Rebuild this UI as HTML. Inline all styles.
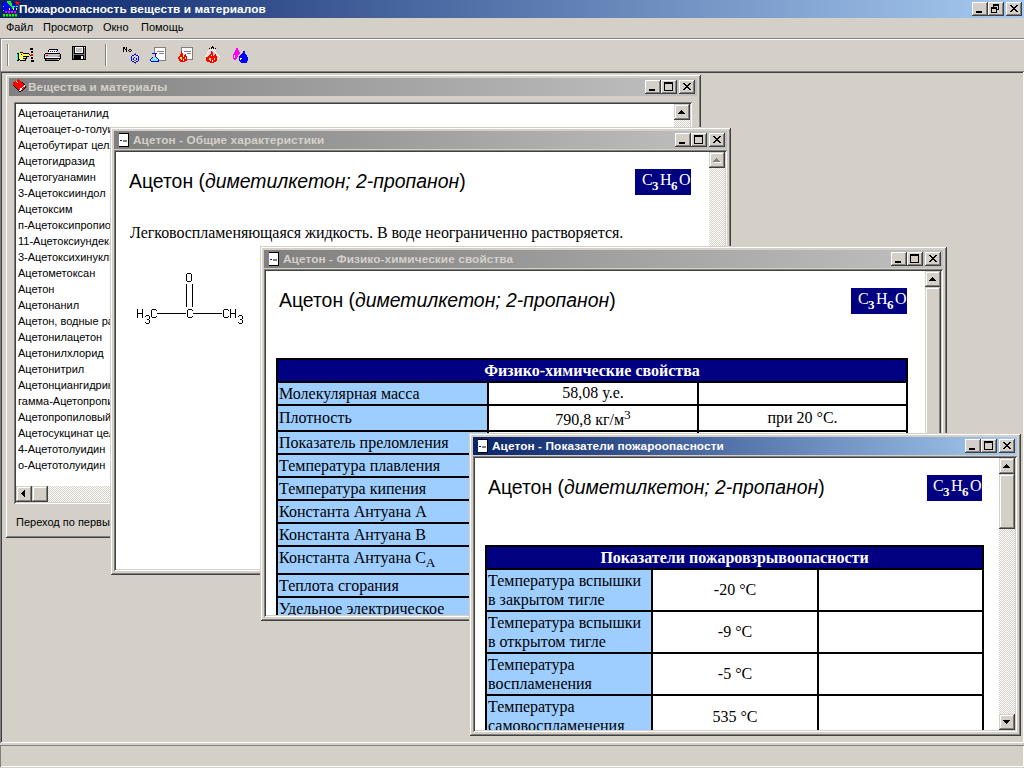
<!DOCTYPE html><html><head><meta charset="utf-8"><style>
html,body{margin:0;padding:0}
body{width:1024px;height:768px;position:relative;overflow:hidden;background:#D4D0C8;font-family:"Liberation Sans",sans-serif}
body div,body svg{position:absolute;box-sizing:border-box}
.t{white-space:nowrap}
.ui{font:11px/16px "Liberation Sans",sans-serif}
.cap{font:bold 11.8px/16px "Liberation Sans",sans-serif;letter-spacing:0.1px}
.hd{font:19.4px/22px "Liberation Sans",sans-serif}
.sr{font:16px/19px "Liberation Serif",serif}
sub,sup{line-height:0}
.fsub{font:bold 13px/19px "Liberation Serif",serif}
.srb{font:bold 16px/19px "Liberation Serif",serif}
</style></head><body>
<div style="left:0px;top:0px;width:1024px;height:18px;background:linear-gradient(to right,#0A246A,#A6CAF0);"></div>
<svg style="left:0px;top:0px" width="20" height="17" shape-rendering="crispEdges"><rect x="4" y="1" width="1" height="1" fill="#000000"/><rect x="5" y="1" width="2" height="1" fill="#0000FF"/><rect x="7" y="1" width="4" height="1" fill="#00FF00"/><rect x="11" y="1" width="1" height="1" fill="#0000FF"/><rect x="12" y="1" width="1" height="1" fill="#000000"/><rect x="16" y="1" width="1" height="1" fill="#FF0000"/><rect x="3" y="2" width="1" height="1" fill="#000000"/><rect x="4" y="2" width="3" height="1" fill="#0000FF"/><rect x="7" y="2" width="4" height="1" fill="#00FF00"/><rect x="11" y="2" width="2" height="1" fill="#0000FF"/><rect x="13" y="2" width="1" height="1" fill="#000000"/><rect x="15" y="2" width="5" height="1" fill="#FF0000"/><rect x="2" y="3" width="1" height="1" fill="#000000"/><rect x="3" y="3" width="5" height="1" fill="#0000FF"/><rect x="8" y="3" width="4" height="1" fill="#00FF00"/><rect x="12" y="3" width="2" height="1" fill="#0000FF"/><rect x="14" y="3" width="1" height="1" fill="#000000"/><rect x="16" y="3" width="3" height="1" fill="#FF0000"/><rect x="2" y="4" width="7" height="1" fill="#0000FF"/><rect x="9" y="4" width="3" height="1" fill="#00FF00"/><rect x="12" y="4" width="3" height="1" fill="#0000FF"/><rect x="16" y="4" width="1" height="1" fill="#FF0000"/><rect x="18" y="4" width="1" height="1" fill="#FF0000"/><rect x="2" y="5" width="8" height="1" fill="#0000FF"/><rect x="10" y="5" width="2" height="1" fill="#00FF00"/><rect x="12" y="5" width="3" height="1" fill="#0000FF"/><rect x="2" y="6" width="1" height="1" fill="#0000FF"/><rect x="3" y="6" width="1" height="1" fill="#00FFFF"/><rect x="4" y="6" width="7" height="1" fill="#0000FF"/><rect x="11" y="6" width="2" height="1" fill="#00FF00"/><rect x="13" y="6" width="2" height="1" fill="#00FFFF"/><rect x="16" y="6" width="2" height="1" fill="#00FFFF"/><rect x="2" y="7" width="10" height="1" fill="#0000FF"/><rect x="12" y="7" width="2" height="1" fill="#00FF00"/><rect x="14" y="7" width="1" height="1" fill="#0000FF"/><rect x="2" y="8" width="7" height="1" fill="#0000FF"/><rect x="9" y="8" width="1" height="1" fill="#FFFF00"/><rect x="10" y="8" width="2" height="1" fill="#0000FF"/><rect x="12" y="8" width="1" height="1" fill="#00FF00"/><rect x="13" y="8" width="1" height="1" fill="#FFFF00"/><rect x="14" y="8" width="2" height="1" fill="#0000FF"/><rect x="16" y="8" width="1" height="1" fill="#FFFF00"/><rect x="2" y="9" width="1" height="1" fill="#000000"/><rect x="3" y="9" width="6" height="1" fill="#0000FF"/><rect x="9" y="9" width="1" height="1" fill="#FFFF00"/><rect x="10" y="9" width="3" height="1" fill="#0000FF"/><rect x="13" y="9" width="1" height="1" fill="#FFFF00"/><rect x="14" y="9" width="2" height="1" fill="#0000FF"/><rect x="16" y="9" width="1" height="1" fill="#FFFF00"/><rect x="2" y="10" width="1" height="1" fill="#000000"/><rect x="3" y="10" width="1" height="1" fill="#00FFFF"/><rect x="4" y="10" width="11" height="1" fill="#0000FF"/><rect x="3" y="11" width="2" height="1" fill="#0000FF"/><rect x="5" y="11" width="2" height="1" fill="#FF00FF"/><rect x="7" y="11" width="1" height="1" fill="#0000FF"/><rect x="8" y="11" width="2" height="1" fill="#FF00FF"/><rect x="10" y="11" width="1" height="1" fill="#0000FF"/><rect x="11" y="11" width="2" height="1" fill="#FF00FF"/><rect x="13" y="11" width="1" height="1" fill="#0000FF"/><rect x="14" y="11" width="2" height="1" fill="#FF00FF"/><rect x="4" y="12" width="1" height="1" fill="#000000"/><rect x="5" y="12" width="2" height="1" fill="#FF00FF"/><rect x="7" y="12" width="1" height="1" fill="#000000"/><rect x="8" y="12" width="2" height="1" fill="#FF00FF"/><rect x="10" y="12" width="1" height="1" fill="#000000"/><rect x="11" y="12" width="2" height="1" fill="#FF00FF"/><rect x="13" y="12" width="1" height="1" fill="#000000"/><rect x="14" y="12" width="2" height="1" fill="#FF00FF"/><rect x="3" y="14" width="2" height="1" fill="#00FF00"/><rect x="6" y="14" width="2" height="1" fill="#00FF00"/><rect x="9" y="14" width="2" height="1" fill="#00FF00"/><rect x="12" y="14" width="2" height="1" fill="#00FF00"/><rect x="15" y="14" width="2" height="1" fill="#00FF00"/><rect x="3" y="15" width="2" height="1" fill="#00FF00"/><rect x="6" y="15" width="2" height="1" fill="#00FF00"/><rect x="9" y="15" width="2" height="1" fill="#00FF00"/><rect x="12" y="15" width="2" height="1" fill="#00FF00"/><rect x="15" y="15" width="2" height="1" fill="#00FF00"/><rect x="3" y="16" width="2" height="1" fill="#00A000"/><rect x="6" y="16" width="2" height="1" fill="#00A000"/><rect x="9" y="16" width="2" height="1" fill="#00A000"/><rect x="12" y="16" width="2" height="1" fill="#00A000"/><rect x="15" y="16" width="2" height="1" fill="#00A000"/></svg>
<div class="t cap" style="left:19px;top:1px;color:#fff">Пожароопасность веществ и материалов</div>
<div style="left:972px;top:2px;width:16px;height:14px;background:#D4D0C8;box-shadow:inset -1px -1px #404040,inset 1px 1px #FFFFFF,inset -2px -2px #808080,inset 2px 2px #D4D0C8"></div>
<svg style="left:976px;top:11px" width="6" height="2" fill="#000"><rect x="0" y="0" width="6" height="1"/><rect x="0" y="1" width="6" height="1"/></svg>
<div style="left:988px;top:2px;width:16px;height:14px;background:#D4D0C8;box-shadow:inset -1px -1px #404040,inset 1px 1px #FFFFFF,inset -2px -2px #808080,inset 2px 2px #D4D0C8"></div>
<svg style="left:991px;top:4px" width="8" height="9" fill="#000"><rect x="2" y="0" width="6" height="1"/><rect x="2" y="1" width="6" height="1"/><rect x="2" y="2" width="1" height="1"/><rect x="7" y="2" width="1" height="1"/><rect x="0" y="3" width="6" height="1"/><rect x="7" y="3" width="1" height="1"/><rect x="0" y="4" width="6" height="1"/><rect x="7" y="4" width="1" height="1"/><rect x="0" y="5" width="1" height="1"/><rect x="5" y="5" width="3" height="1"/><rect x="0" y="6" width="1" height="1"/><rect x="5" y="6" width="1" height="1"/><rect x="0" y="7" width="1" height="1"/><rect x="5" y="7" width="1" height="1"/><rect x="0" y="8" width="6" height="1"/></svg>
<div style="left:1006px;top:2px;width:16px;height:14px;background:#D4D0C8;box-shadow:inset -1px -1px #404040,inset 1px 1px #FFFFFF,inset -2px -2px #808080,inset 2px 2px #D4D0C8"></div>
<svg style="left:1010px;top:5px" width="8" height="7" fill="#000"><rect x="0" y="0" width="2" height="1"/><rect x="6" y="0" width="2" height="1"/><rect x="1" y="1" width="2" height="1"/><rect x="5" y="1" width="2" height="1"/><rect x="2" y="2" width="4" height="1"/><rect x="3" y="3" width="2" height="1"/><rect x="2" y="4" width="4" height="1"/><rect x="1" y="5" width="2" height="1"/><rect x="5" y="5" width="2" height="1"/><rect x="0" y="6" width="2" height="1"/><rect x="6" y="6" width="2" height="1"/></svg>
<div class="t ui" style="left:6px;top:19px;color:#000">Файл</div>
<div class="t ui" style="left:43px;top:19px;color:#000">Просмотр</div>
<div class="t ui" style="left:103px;top:19px;color:#000">Окно</div>
<div class="t ui" style="left:141px;top:19px;color:#000">Помощь</div>
<div style="left:0px;top:38px;width:1024px;height:1px;background:#808080;"></div>
<div style="left:0px;top:39px;width:1024px;height:1px;background:#FFFFFF;"></div>
<div style="left:0px;top:38px;width:1px;height:33px;background:#808080;"></div>
<div style="left:1px;top:39px;width:1px;height:32px;background:#FFFFFF;"></div>
<div style="left:7px;top:44px;width:1px;height:22px;background:#808080;"></div>
<div style="left:8px;top:44px;width:1px;height:22px;background:#FFFFFF;"></div>
<div style="left:105px;top:44px;width:1px;height:22px;background:#808080;"></div>
<div style="left:106px;top:44px;width:1px;height:22px;background:#FFFFFF;"></div>
<svg style="left:14px;top:44px" width="22" height="18" shape-rendering="crispEdges"><rect x="16" y="4" width="3" height="1" fill="#000000"/><rect x="16" y="5" width="3" height="1" fill="#000000"/><rect x="17" y="7" width="2" height="1" fill="#000000"/><rect x="6" y="8" width="3" height="1" fill="#000000"/><rect x="17" y="8" width="2" height="1" fill="#000000"/><rect x="3" y="9" width="2" height="1" fill="#000000"/><rect x="5" y="9" width="4" height="1" fill="#FFFF00"/><rect x="9" y="9" width="6" height="1" fill="#000000"/><rect x="3" y="10" width="1" height="1" fill="#00FFFF"/><rect x="4" y="10" width="1" height="1" fill="#000000"/><rect x="5" y="10" width="2" height="1" fill="#FFFF00"/><rect x="7" y="10" width="1" height="1" fill="#000000"/><rect x="8" y="10" width="1" height="1" fill="#FFFF00"/><rect x="9" y="10" width="1" height="1" fill="#FFFFFF"/><rect x="10" y="10" width="1" height="1" fill="#FFFF00"/><rect x="11" y="10" width="1" height="1" fill="#FFFFFF"/><rect x="12" y="10" width="1" height="1" fill="#FFFF00"/><rect x="13" y="10" width="1" height="1" fill="#FFFFFF"/><rect x="14" y="10" width="1" height="1" fill="#FFFF00"/><rect x="15" y="10" width="1" height="1" fill="#000000"/><rect x="17" y="10" width="2" height="1" fill="#FF0000"/><rect x="3" y="11" width="1" height="1" fill="#00FFFF"/><rect x="4" y="11" width="1" height="1" fill="#000000"/><rect x="5" y="11" width="1" height="1" fill="#FFFF00"/><rect x="6" y="11" width="1" height="1" fill="#FFFFFF"/><rect x="7" y="11" width="3" height="1" fill="#FFFF00"/><rect x="10" y="11" width="1" height="1" fill="#FFFFFF"/><rect x="11" y="11" width="1" height="1" fill="#FFFF00"/><rect x="12" y="11" width="1" height="1" fill="#FFFFFF"/><rect x="13" y="11" width="3" height="1" fill="#FFFF00"/><rect x="16" y="11" width="1" height="1" fill="#000000"/><rect x="17" y="11" width="2" height="1" fill="#FF0000"/><rect x="3" y="12" width="1" height="1" fill="#00FFFF"/><rect x="4" y="12" width="1" height="1" fill="#000000"/><rect x="5" y="12" width="2" height="1" fill="#FFFF00"/><rect x="7" y="12" width="1" height="1" fill="#FFFFFF"/><rect x="8" y="12" width="1" height="1" fill="#FFFF00"/><rect x="9" y="12" width="6" height="1" fill="#000000"/><rect x="3" y="13" width="1" height="1" fill="#00FFFF"/><rect x="4" y="13" width="1" height="1" fill="#000000"/><rect x="5" y="13" width="1" height="1" fill="#FFFF00"/><rect x="6" y="13" width="1" height="1" fill="#FFFFFF"/><rect x="7" y="13" width="1" height="1" fill="#FFFF00"/><rect x="8" y="13" width="1" height="1" fill="#FFFFFF"/><rect x="9" y="13" width="1" height="1" fill="#FFFF00"/><rect x="10" y="13" width="1" height="1" fill="#FFFFFF"/><rect x="11" y="13" width="1" height="1" fill="#FFFF00"/><rect x="12" y="13" width="1" height="1" fill="#000000"/><rect x="17" y="13" width="2" height="1" fill="#000000"/><rect x="3" y="14" width="1" height="1" fill="#00FFFF"/><rect x="4" y="14" width="1" height="1" fill="#000000"/><rect x="5" y="14" width="2" height="1" fill="#FFFF00"/><rect x="7" y="14" width="1" height="1" fill="#FFFFFF"/><rect x="8" y="14" width="1" height="1" fill="#FFFF00"/><rect x="9" y="14" width="4" height="1" fill="#000000"/><rect x="17" y="14" width="2" height="1" fill="#000000"/><rect x="3" y="15" width="1" height="1" fill="#00FFFF"/><rect x="4" y="15" width="2" height="1" fill="#000000"/><rect x="6" y="15" width="1" height="1" fill="#FFFF00"/><rect x="7" y="15" width="1" height="1" fill="#FFFFFF"/><rect x="8" y="15" width="1" height="1" fill="#FFFF00"/><rect x="9" y="15" width="1" height="1" fill="#FFFFFF"/><rect x="10" y="15" width="1" height="1" fill="#FFFF00"/><rect x="11" y="15" width="1" height="1" fill="#000000"/><rect x="3" y="16" width="2" height="1" fill="#000000"/><rect x="6" y="16" width="6" height="1" fill="#000000"/><rect x="17" y="16" width="3" height="1" fill="#000000"/><rect x="17" y="17" width="3" height="1" fill="#000000"/></svg>
<svg style="left:40px;top:44px" width="22" height="17" shape-rendering="crispEdges"><rect x="9" y="5" width="9" height="1" fill="#000000"/><rect x="8" y="6" width="1" height="1" fill="#000000"/><rect x="9" y="6" width="8" height="1" fill="#FFFFFF"/><rect x="17" y="6" width="1" height="1" fill="#000000"/><rect x="8" y="7" width="1" height="1" fill="#000000"/><rect x="9" y="7" width="1" height="1" fill="#FFFFFF"/><rect x="10" y="7" width="1" height="1" fill="#0000FF"/><rect x="11" y="7" width="1" height="1" fill="#FFFFFF"/><rect x="12" y="7" width="1" height="1" fill="#0000FF"/><rect x="13" y="7" width="1" height="1" fill="#FFFFFF"/><rect x="14" y="7" width="1" height="1" fill="#0000FF"/><rect x="15" y="7" width="1" height="1" fill="#FFFFFF"/><rect x="16" y="7" width="1" height="1" fill="#0000FF"/><rect x="8" y="8" width="9" height="1" fill="#FFFFFF"/><rect x="5" y="9" width="15" height="1" fill="#000000"/><rect x="4" y="10" width="1" height="1" fill="#000000"/><rect x="5" y="10" width="15" height="1" fill="#C0C0C0"/><rect x="20" y="10" width="1" height="1" fill="#000000"/><rect x="4" y="11" width="1" height="1" fill="#000000"/><rect x="5" y="11" width="1" height="1" fill="#C0C0C0"/><rect x="6" y="11" width="2" height="1" fill="#FF0000"/><rect x="8" y="11" width="11" height="1" fill="#C0C0C0"/><rect x="19" y="11" width="1" height="1" fill="#808080"/><rect x="20" y="11" width="1" height="1" fill="#000000"/><rect x="4" y="12" width="1" height="1" fill="#000000"/><rect x="5" y="12" width="13" height="1" fill="#C0C0C0"/><rect x="18" y="12" width="2" height="1" fill="#808080"/><rect x="20" y="12" width="1" height="1" fill="#000000"/><rect x="4" y="13" width="1" height="1" fill="#000000"/><rect x="5" y="13" width="15" height="1" fill="#FFFFFF"/><rect x="20" y="13" width="1" height="1" fill="#000000"/><rect x="4" y="14" width="17" height="1" fill="#000000"/><rect x="5" y="15" width="1" height="1" fill="#000000"/><rect x="6" y="15" width="12" height="1" fill="#808080"/><rect x="18" y="15" width="1" height="1" fill="#FFFFFF"/><rect x="19" y="15" width="1" height="1" fill="#000000"/><rect x="5" y="16" width="14" height="1" fill="#000000"/></svg>
<svg style="left:68px;top:42px" width="22" height="18" shape-rendering="crispEdges"><rect x="4" y="4" width="14" height="1" fill="#000000"/><rect x="4" y="5" width="1" height="1" fill="#000000"/><rect x="5" y="5" width="1" height="1" fill="#808080"/><rect x="6" y="5" width="1" height="1" fill="#000000"/><rect x="7" y="5" width="8" height="1" fill="#FFFFFF"/><rect x="15" y="5" width="1" height="1" fill="#000000"/><rect x="16" y="5" width="1" height="1" fill="#FFFFFF"/><rect x="17" y="5" width="1" height="1" fill="#000000"/><rect x="4" y="6" width="1" height="1" fill="#000000"/><rect x="5" y="6" width="1" height="1" fill="#808080"/><rect x="6" y="6" width="1" height="1" fill="#000000"/><rect x="7" y="6" width="1" height="1" fill="#FFFFFF"/><rect x="8" y="6" width="6" height="1" fill="#C0C0C0"/><rect x="14" y="6" width="1" height="1" fill="#FFFFFF"/><rect x="15" y="6" width="1" height="1" fill="#000000"/><rect x="16" y="6" width="1" height="1" fill="#808080"/><rect x="17" y="6" width="1" height="1" fill="#000000"/><rect x="4" y="7" width="1" height="1" fill="#000000"/><rect x="5" y="7" width="1" height="1" fill="#808080"/><rect x="6" y="7" width="1" height="1" fill="#000000"/><rect x="7" y="7" width="1" height="1" fill="#FFFFFF"/><rect x="8" y="7" width="6" height="1" fill="#C0C0C0"/><rect x="14" y="7" width="1" height="1" fill="#FFFFFF"/><rect x="15" y="7" width="1" height="1" fill="#000000"/><rect x="16" y="7" width="1" height="1" fill="#808080"/><rect x="17" y="7" width="1" height="1" fill="#000000"/><rect x="4" y="8" width="1" height="1" fill="#000000"/><rect x="5" y="8" width="1" height="1" fill="#808080"/><rect x="6" y="8" width="1" height="1" fill="#000000"/><rect x="7" y="8" width="1" height="1" fill="#FFFFFF"/><rect x="8" y="8" width="6" height="1" fill="#C0C0C0"/><rect x="14" y="8" width="1" height="1" fill="#FFFFFF"/><rect x="15" y="8" width="1" height="1" fill="#000000"/><rect x="16" y="8" width="1" height="1" fill="#808080"/><rect x="17" y="8" width="1" height="1" fill="#000000"/><rect x="4" y="9" width="1" height="1" fill="#000000"/><rect x="5" y="9" width="1" height="1" fill="#808080"/><rect x="6" y="9" width="1" height="1" fill="#000000"/><rect x="7" y="9" width="1" height="1" fill="#FFFFFF"/><rect x="8" y="9" width="6" height="1" fill="#C0C0C0"/><rect x="14" y="9" width="1" height="1" fill="#FFFFFF"/><rect x="15" y="9" width="1" height="1" fill="#000000"/><rect x="16" y="9" width="1" height="1" fill="#808080"/><rect x="17" y="9" width="1" height="1" fill="#000000"/><rect x="4" y="10" width="1" height="1" fill="#000000"/><rect x="5" y="10" width="1" height="1" fill="#808080"/><rect x="6" y="10" width="1" height="1" fill="#000000"/><rect x="7" y="10" width="8" height="1" fill="#FFFFFF"/><rect x="15" y="10" width="1" height="1" fill="#000000"/><rect x="16" y="10" width="1" height="1" fill="#808080"/><rect x="17" y="10" width="1" height="1" fill="#000000"/><rect x="4" y="11" width="1" height="1" fill="#000000"/><rect x="5" y="11" width="1" height="1" fill="#808080"/><rect x="6" y="11" width="10" height="1" fill="#000000"/><rect x="16" y="11" width="1" height="1" fill="#808080"/><rect x="17" y="11" width="1" height="1" fill="#000000"/><rect x="4" y="12" width="1" height="1" fill="#000000"/><rect x="5" y="12" width="12" height="1" fill="#808080"/><rect x="17" y="12" width="1" height="1" fill="#000000"/><rect x="4" y="13" width="1" height="1" fill="#000000"/><rect x="5" y="13" width="1" height="1" fill="#808080"/><rect x="6" y="13" width="10" height="1" fill="#000000"/><rect x="16" y="13" width="1" height="1" fill="#808080"/><rect x="17" y="13" width="1" height="1" fill="#000000"/><rect x="4" y="14" width="1" height="1" fill="#000000"/><rect x="5" y="14" width="1" height="1" fill="#808080"/><rect x="6" y="14" width="7" height="1" fill="#000000"/><rect x="13" y="14" width="2" height="1" fill="#FFFFFF"/><rect x="15" y="14" width="1" height="1" fill="#000000"/><rect x="16" y="14" width="1" height="1" fill="#808080"/><rect x="17" y="14" width="1" height="1" fill="#000000"/><rect x="4" y="15" width="1" height="1" fill="#000000"/><rect x="5" y="15" width="1" height="1" fill="#808080"/><rect x="6" y="15" width="7" height="1" fill="#000000"/><rect x="13" y="15" width="2" height="1" fill="#FFFFFF"/><rect x="15" y="15" width="1" height="1" fill="#000000"/><rect x="16" y="15" width="1" height="1" fill="#808080"/><rect x="17" y="15" width="1" height="1" fill="#000000"/><rect x="4" y="16" width="1" height="1" fill="#000000"/><rect x="5" y="16" width="1" height="1" fill="#808080"/><rect x="6" y="16" width="7" height="1" fill="#000000"/><rect x="13" y="16" width="2" height="1" fill="#FFFFFF"/><rect x="15" y="16" width="1" height="1" fill="#000000"/><rect x="16" y="16" width="1" height="1" fill="#808080"/><rect x="17" y="16" width="1" height="1" fill="#000000"/><rect x="4" y="17" width="14" height="1" fill="#000000"/></svg>
<svg style="left:120px;top:44px" width="22" height="20" shape-rendering="crispEdges"><rect x="3" y="3" width="2" height="1" fill="#000000"/><rect x="6" y="3" width="1" height="1" fill="#000000"/><rect x="3" y="4" width="2" height="1" fill="#000000"/><rect x="6" y="4" width="1" height="1" fill="#000000"/><rect x="3" y="5" width="1" height="1" fill="#000000"/><rect x="5" y="5" width="2" height="1" fill="#000000"/><rect x="9" y="5" width="2" height="1" fill="#000000"/><rect x="3" y="6" width="1" height="1" fill="#000000"/><rect x="6" y="6" width="1" height="1" fill="#000000"/><rect x="8" y="6" width="1" height="1" fill="#000000"/><rect x="11" y="6" width="1" height="1" fill="#000000"/><rect x="3" y="7" width="1" height="1" fill="#000000"/><rect x="6" y="7" width="1" height="1" fill="#000000"/><rect x="9" y="7" width="2" height="1" fill="#000000"/><rect x="15" y="9" width="1" height="1" fill="#808000"/><rect x="14" y="10" width="2" height="1" fill="#0000FF"/><rect x="12" y="11" width="2" height="1" fill="#0000FF"/><rect x="16" y="11" width="2" height="1" fill="#0000FF"/><rect x="11" y="12" width="1" height="1" fill="#0000FF"/><rect x="18" y="12" width="1" height="1" fill="#0000FF"/><rect x="11" y="13" width="1" height="1" fill="#0000FF"/><rect x="14" y="13" width="1" height="1" fill="#0000FF"/><rect x="18" y="13" width="1" height="1" fill="#0000FF"/><rect x="11" y="14" width="1" height="1" fill="#0000FF"/><rect x="13" y="14" width="1" height="1" fill="#0000FF"/><rect x="16" y="14" width="1" height="1" fill="#0000FF"/><rect x="18" y="14" width="1" height="1" fill="#0000FF"/><rect x="11" y="15" width="1" height="1" fill="#0000FF"/><rect x="13" y="15" width="1" height="1" fill="#0000FF"/><rect x="16" y="15" width="1" height="1" fill="#0000FF"/><rect x="18" y="15" width="1" height="1" fill="#0000FF"/><rect x="11" y="16" width="1" height="1" fill="#0000FF"/><rect x="14" y="16" width="2" height="1" fill="#808000"/><rect x="18" y="16" width="1" height="1" fill="#0000FF"/><rect x="12" y="17" width="2" height="1" fill="#0000FF"/><rect x="16" y="17" width="2" height="1" fill="#0000FF"/><rect x="14" y="18" width="2" height="1" fill="#0000FF"/><rect x="15" y="19" width="1" height="1" fill="#808000"/></svg>
<svg style="left:146px;top:44px" width="22" height="18" shape-rendering="crispEdges"><rect x="8" y="3" width="12" height="1" fill="#808080"/><rect x="8" y="4" width="1" height="1" fill="#808080"/><rect x="9" y="4" width="10" height="1" fill="#FFFFFF"/><rect x="19" y="4" width="1" height="1" fill="#808080"/><rect x="8" y="5" width="1" height="1" fill="#808080"/><rect x="9" y="5" width="10" height="1" fill="#FFFFFF"/><rect x="19" y="5" width="1" height="1" fill="#808080"/><rect x="8" y="6" width="1" height="1" fill="#808080"/><rect x="9" y="6" width="10" height="1" fill="#FFFFFF"/><rect x="19" y="6" width="1" height="1" fill="#808080"/><rect x="8" y="7" width="1" height="1" fill="#808080"/><rect x="9" y="7" width="2" height="1" fill="#FFFFFF"/><rect x="11" y="7" width="7" height="1" fill="#808080"/><rect x="18" y="7" width="1" height="1" fill="#FFFFFF"/><rect x="19" y="7" width="1" height="1" fill="#808080"/><rect x="8" y="8" width="1" height="1" fill="#808080"/><rect x="9" y="8" width="10" height="1" fill="#FFFFFF"/><rect x="19" y="8" width="1" height="1" fill="#808080"/><rect x="6" y="9" width="5" height="1" fill="#0000FF"/><rect x="11" y="9" width="2" height="1" fill="#FFFFFF"/><rect x="13" y="9" width="5" height="1" fill="#808080"/><rect x="18" y="9" width="1" height="1" fill="#FFFFFF"/><rect x="19" y="9" width="1" height="1" fill="#808080"/><rect x="9" y="10" width="1" height="1" fill="#0000FF"/><rect x="10" y="10" width="9" height="1" fill="#FFFFFF"/><rect x="19" y="10" width="1" height="1" fill="#808080"/><rect x="9" y="11" width="1" height="1" fill="#0000FF"/><rect x="10" y="11" width="9" height="1" fill="#FFFFFF"/><rect x="19" y="11" width="1" height="1" fill="#808080"/><rect x="9" y="12" width="1" height="1" fill="#0000FF"/><rect x="10" y="12" width="9" height="1" fill="#FFFFFF"/><rect x="19" y="12" width="1" height="1" fill="#808080"/><rect x="6" y="13" width="1" height="1" fill="#0000FF"/><rect x="10" y="13" width="1" height="1" fill="#0000FF"/><rect x="11" y="13" width="8" height="1" fill="#FFFFFF"/><rect x="19" y="13" width="1" height="1" fill="#808080"/><rect x="5" y="14" width="1" height="1" fill="#0000FF"/><rect x="6" y="14" width="1" height="1" fill="#00FFFF"/><rect x="7" y="14" width="1" height="1" fill="#FFFFFF"/><rect x="8" y="14" width="1" height="1" fill="#00FFFF"/><rect x="9" y="14" width="1" height="1" fill="#FFFFFF"/><rect x="10" y="14" width="1" height="1" fill="#00FFFF"/><rect x="11" y="14" width="1" height="1" fill="#0000FF"/><rect x="12" y="14" width="7" height="1" fill="#FFFFFF"/><rect x="19" y="14" width="1" height="1" fill="#808080"/><rect x="4" y="15" width="1" height="1" fill="#0000FF"/><rect x="5" y="15" width="1" height="1" fill="#FFFFFF"/><rect x="6" y="15" width="1" height="1" fill="#00FFFF"/><rect x="7" y="15" width="1" height="1" fill="#FFFFFF"/><rect x="8" y="15" width="1" height="1" fill="#00FFFF"/><rect x="9" y="15" width="1" height="1" fill="#FFFFFF"/><rect x="10" y="15" width="1" height="1" fill="#00FFFF"/><rect x="11" y="15" width="1" height="1" fill="#FFFFFF"/><rect x="12" y="15" width="1" height="1" fill="#0000FF"/><rect x="13" y="15" width="6" height="1" fill="#FFFFFF"/><rect x="19" y="15" width="1" height="1" fill="#808080"/><rect x="4" y="16" width="1" height="1" fill="#0000FF"/><rect x="5" y="16" width="1" height="1" fill="#00FFFF"/><rect x="6" y="16" width="1" height="1" fill="#FFFFFF"/><rect x="7" y="16" width="1" height="1" fill="#00FFFF"/><rect x="8" y="16" width="1" height="1" fill="#FFFFFF"/><rect x="9" y="16" width="1" height="1" fill="#00FFFF"/><rect x="10" y="16" width="1" height="1" fill="#FFFFFF"/><rect x="11" y="16" width="1" height="1" fill="#00FFFF"/><rect x="12" y="16" width="1" height="1" fill="#0000FF"/><rect x="13" y="16" width="7" height="1" fill="#808080"/><rect x="5" y="17" width="8" height="1" fill="#0000FF"/></svg>
<svg style="left:174px;top:44px" width="22" height="18" shape-rendering="crispEdges"><rect x="7" y="3" width="12" height="1" fill="#808080"/><rect x="7" y="4" width="1" height="1" fill="#808080"/><rect x="8" y="4" width="10" height="1" fill="#FFFFFF"/><rect x="18" y="4" width="1" height="1" fill="#808080"/><rect x="7" y="5" width="1" height="1" fill="#808080"/><rect x="8" y="5" width="10" height="1" fill="#FFFFFF"/><rect x="18" y="5" width="1" height="1" fill="#808080"/><rect x="7" y="6" width="1" height="1" fill="#808080"/><rect x="8" y="6" width="10" height="1" fill="#FFFFFF"/><rect x="18" y="6" width="1" height="1" fill="#808080"/><rect x="7" y="7" width="1" height="1" fill="#FF0000"/><rect x="8" y="7" width="2" height="1" fill="#FFFFFF"/><rect x="10" y="7" width="7" height="1" fill="#808080"/><rect x="17" y="7" width="1" height="1" fill="#FFFFFF"/><rect x="18" y="7" width="1" height="1" fill="#808080"/><rect x="7" y="8" width="1" height="1" fill="#FF0000"/><rect x="8" y="8" width="10" height="1" fill="#FFFFFF"/><rect x="18" y="8" width="1" height="1" fill="#808080"/><rect x="7" y="9" width="2" height="1" fill="#FF0000"/><rect x="9" y="9" width="4" height="1" fill="#FFFFFF"/><rect x="13" y="9" width="4" height="1" fill="#808080"/><rect x="17" y="9" width="1" height="1" fill="#FFFFFF"/><rect x="18" y="9" width="1" height="1" fill="#808080"/><rect x="6" y="10" width="3" height="1" fill="#FF0000"/><rect x="9" y="10" width="2" height="1" fill="#FFFFFF"/><rect x="11" y="10" width="1" height="1" fill="#FF0000"/><rect x="12" y="10" width="6" height="1" fill="#FFFFFF"/><rect x="18" y="10" width="1" height="1" fill="#808080"/><rect x="6" y="11" width="3" height="1" fill="#FF0000"/><rect x="9" y="11" width="1" height="1" fill="#FFFFFF"/><rect x="10" y="11" width="2" height="1" fill="#FF0000"/><rect x="12" y="11" width="6" height="1" fill="#FFFFFF"/><rect x="18" y="11" width="1" height="1" fill="#808080"/><rect x="5" y="12" width="4" height="1" fill="#FF0000"/><rect x="9" y="12" width="1" height="1" fill="#FFFFFF"/><rect x="10" y="12" width="3" height="1" fill="#FF0000"/><rect x="13" y="12" width="5" height="1" fill="#FFFFFF"/><rect x="18" y="12" width="1" height="1" fill="#808080"/><rect x="4" y="13" width="2" height="1" fill="#FF0000"/><rect x="6" y="13" width="2" height="1" fill="#FFFF00"/><rect x="8" y="13" width="3" height="1" fill="#FF0000"/><rect x="11" y="13" width="1" height="1" fill="#FFFF00"/><rect x="12" y="13" width="1" height="1" fill="#FF0000"/><rect x="13" y="13" width="5" height="1" fill="#FFFFFF"/><rect x="18" y="13" width="1" height="1" fill="#808080"/><rect x="4" y="14" width="2" height="1" fill="#FF0000"/><rect x="6" y="14" width="2" height="1" fill="#FFFF00"/><rect x="8" y="14" width="3" height="1" fill="#FF0000"/><rect x="11" y="14" width="1" height="1" fill="#FFFF00"/><rect x="12" y="14" width="1" height="1" fill="#FF0000"/><rect x="13" y="14" width="5" height="1" fill="#FFFFFF"/><rect x="18" y="14" width="1" height="1" fill="#808080"/><rect x="5" y="15" width="2" height="1" fill="#FF0000"/><rect x="7" y="15" width="1" height="1" fill="#FFFFFF"/><rect x="8" y="15" width="1" height="1" fill="#FF0000"/><rect x="9" y="15" width="1" height="1" fill="#FFFFFF"/><rect x="10" y="15" width="3" height="1" fill="#FF0000"/><rect x="13" y="15" width="6" height="1" fill="#808080"/><rect x="5" y="16" width="4" height="1" fill="#FF0000"/><rect x="9" y="16" width="1" height="1" fill="#FFFFFF"/><rect x="10" y="16" width="3" height="1" fill="#FF0000"/><rect x="6" y="17" width="5" height="1" fill="#FF0000"/></svg>
<svg style="left:200px;top:42px" width="22" height="21" shape-rendering="crispEdges"><rect x="12" y="4" width="1" height="1" fill="#000000"/><rect x="11" y="5" width="3" height="1" fill="#000000"/><rect x="9" y="6" width="1" height="1" fill="#000000"/><rect x="11" y="6" width="1" height="1" fill="#000000"/><rect x="13" y="6" width="1" height="1" fill="#000000"/><rect x="15" y="6" width="1" height="1" fill="#000000"/><rect x="10" y="7" width="1" height="1" fill="#FFFFFF"/><rect x="12" y="7" width="1" height="1" fill="#FFFFFF"/><rect x="14" y="7" width="1" height="1" fill="#FFFFFF"/><rect x="9" y="8" width="1" height="1" fill="#FFFFFF"/><rect x="11" y="8" width="1" height="1" fill="#FFFFFF"/><rect x="13" y="8" width="1" height="1" fill="#FFFFFF"/><rect x="15" y="8" width="1" height="1" fill="#FFFFFF"/><rect x="8" y="9" width="1" height="1" fill="#FFFFFF"/><rect x="11" y="9" width="1" height="1" fill="#FF0000"/><rect x="14" y="9" width="1" height="1" fill="#FFFFFF"/><rect x="7" y="10" width="1" height="1" fill="#FFFFFF"/><rect x="11" y="10" width="2" height="1" fill="#FF0000"/><rect x="15" y="10" width="1" height="1" fill="#FFFFFF"/><rect x="8" y="11" width="1" height="1" fill="#FFFFFF"/><rect x="11" y="11" width="2" height="1" fill="#FF0000"/><rect x="16" y="11" width="1" height="1" fill="#FFFFFF"/><rect x="7" y="12" width="1" height="1" fill="#FFFFFF"/><rect x="10" y="12" width="3" height="1" fill="#FF0000"/><rect x="15" y="12" width="1" height="1" fill="#FF0000"/><rect x="17" y="12" width="1" height="1" fill="#FFFFFF"/><rect x="6" y="13" width="1" height="1" fill="#FFFFFF"/><rect x="9" y="13" width="2" height="1" fill="#FF0000"/><rect x="11" y="13" width="1" height="1" fill="#FFFFFF"/><rect x="12" y="13" width="1" height="1" fill="#FF0000"/><rect x="14" y="13" width="2" height="1" fill="#FF0000"/><rect x="18" y="13" width="1" height="1" fill="#FFFFFF"/><rect x="5" y="14" width="1" height="1" fill="#FFFFFF"/><rect x="8" y="14" width="9" height="1" fill="#FF0000"/><rect x="19" y="14" width="1" height="1" fill="#FFFFFF"/><rect x="6" y="15" width="11" height="1" fill="#FF0000"/><rect x="5" y="16" width="1" height="1" fill="#FFFFFF"/><rect x="6" y="16" width="3" height="1" fill="#FF0000"/><rect x="9" y="16" width="2" height="1" fill="#FFFF00"/><rect x="11" y="16" width="3" height="1" fill="#FF0000"/><rect x="14" y="16" width="1" height="1" fill="#FFFF00"/><rect x="15" y="16" width="2" height="1" fill="#FF0000"/><rect x="18" y="16" width="1" height="1" fill="#FFFFFF"/><rect x="6" y="17" width="3" height="1" fill="#FF0000"/><rect x="9" y="17" width="2" height="1" fill="#FFFF00"/><rect x="11" y="17" width="3" height="1" fill="#FF0000"/><rect x="14" y="17" width="1" height="1" fill="#FFFF00"/><rect x="15" y="17" width="2" height="1" fill="#FF0000"/><rect x="6" y="18" width="4" height="1" fill="#FF0000"/><rect x="10" y="18" width="1" height="1" fill="#FFFFFF"/><rect x="11" y="18" width="1" height="1" fill="#FF0000"/><rect x="12" y="18" width="1" height="1" fill="#FFFFFF"/><rect x="13" y="18" width="4" height="1" fill="#FF0000"/><rect x="7" y="19" width="5" height="1" fill="#FF0000"/><rect x="12" y="19" width="1" height="1" fill="#FFFFFF"/><rect x="13" y="19" width="3" height="1" fill="#FF0000"/><rect x="10" y="20" width="4" height="1" fill="#FF0000"/></svg>
<svg style="left:228px;top:44px" width="22" height="19" shape-rendering="crispEdges"><rect x="8" y="4" width="2" height="1" fill="#FF00FF"/><rect x="8" y="5" width="2" height="1" fill="#FF00FF"/><rect x="7" y="6" width="4" height="1" fill="#FF00FF"/><rect x="7" y="7" width="4" height="1" fill="#FF00FF"/><rect x="15" y="7" width="2" height="1" fill="#0000FF"/><rect x="6" y="8" width="6" height="1" fill="#FF00FF"/><rect x="15" y="8" width="2" height="1" fill="#0000FF"/><rect x="6" y="9" width="6" height="1" fill="#FF00FF"/><rect x="14" y="9" width="3" height="1" fill="#0000FF"/><rect x="5" y="10" width="6" height="1" fill="#FF00FF"/><rect x="13" y="10" width="5" height="1" fill="#0000FF"/><rect x="5" y="11" width="1" height="1" fill="#FF00FF"/><rect x="6" y="11" width="1" height="1" fill="#FFFFFF"/><rect x="7" y="11" width="3" height="1" fill="#FF00FF"/><rect x="12" y="11" width="7" height="1" fill="#0000FF"/><rect x="5" y="12" width="1" height="1" fill="#FF00FF"/><rect x="6" y="12" width="1" height="1" fill="#FFFFFF"/><rect x="7" y="12" width="3" height="1" fill="#FF00FF"/><rect x="11" y="12" width="8" height="1" fill="#0000FF"/><rect x="5" y="13" width="1" height="1" fill="#FF00FF"/><rect x="6" y="13" width="1" height="1" fill="#FFFFFF"/><rect x="7" y="13" width="2" height="1" fill="#FF00FF"/><rect x="11" y="13" width="9" height="1" fill="#0000FF"/><rect x="5" y="14" width="4" height="1" fill="#FF00FF"/><rect x="11" y="14" width="1" height="1" fill="#0000FF"/><rect x="12" y="14" width="2" height="1" fill="#FFFFFF"/><rect x="14" y="14" width="6" height="1" fill="#0000FF"/><rect x="6" y="15" width="2" height="1" fill="#FF00FF"/><rect x="11" y="15" width="1" height="1" fill="#0000FF"/><rect x="12" y="15" width="1" height="1" fill="#FFFFFF"/><rect x="13" y="15" width="7" height="1" fill="#0000FF"/><rect x="11" y="16" width="9" height="1" fill="#0000FF"/><rect x="12" y="17" width="7" height="1" fill="#0000FF"/><rect x="13" y="18" width="6" height="1" fill="#0000FF"/></svg>
<div style="left:0px;top:71px;width:1024px;height:672px;background:#D4D0C8;box-shadow:inset 1px 1px #808080,inset -1px -1px #FFFFFF,inset 2px 2px #404040,inset -2px -2px #D4D0C8"></div>
<div style="left:0px;top:745px;width:1024px;height:22px;background:#D4D0C8;box-shadow:inset 1px 1px #808080,inset -1px -1px #FFFFFF"></div>
<div style="left:5px;top:74px;width:696px;height:464px;background:#D4D0C8;box-shadow:inset 1px 1px #D4D0C8,inset -1px -1px #404040,inset 2px 2px #FFFFFF,inset -2px -2px #808080"></div>
<div style="left:9px;top:78px;width:688px;height:18px;background:linear-gradient(to right,#808080,#C0C0C0);"></div>

<div class="t cap" style="left:28px;top:79px;color:#D4D0C8">Вещества и материалы</div>
<div style="left:645px;top:80px;width:16px;height:14px;background:#D4D0C8;box-shadow:inset -1px -1px #404040,inset 1px 1px #FFFFFF,inset -2px -2px #808080,inset 2px 2px #D4D0C8"></div>
<svg style="left:649px;top:89px" width="6" height="2" fill="#000"><rect x="0" y="0" width="6" height="1"/><rect x="0" y="1" width="6" height="1"/></svg>
<div style="left:661px;top:80px;width:16px;height:14px;background:#D4D0C8;box-shadow:inset -1px -1px #404040,inset 1px 1px #FFFFFF,inset -2px -2px #808080,inset 2px 2px #D4D0C8"></div>
<svg style="left:664px;top:82px" width="9" height="9" fill="#000"><rect x="0" y="0" width="9" height="1"/><rect x="0" y="1" width="9" height="1"/><rect x="0" y="2" width="1" height="1"/><rect x="8" y="2" width="1" height="1"/><rect x="0" y="3" width="1" height="1"/><rect x="8" y="3" width="1" height="1"/><rect x="0" y="4" width="1" height="1"/><rect x="8" y="4" width="1" height="1"/><rect x="0" y="5" width="1" height="1"/><rect x="8" y="5" width="1" height="1"/><rect x="0" y="6" width="1" height="1"/><rect x="8" y="6" width="1" height="1"/><rect x="0" y="7" width="1" height="1"/><rect x="8" y="7" width="1" height="1"/><rect x="0" y="8" width="9" height="1"/></svg>
<div style="left:679px;top:80px;width:16px;height:14px;background:#D4D0C8;box-shadow:inset -1px -1px #404040,inset 1px 1px #FFFFFF,inset -2px -2px #808080,inset 2px 2px #D4D0C8"></div>
<svg style="left:683px;top:83px" width="8" height="7" fill="#000"><rect x="0" y="0" width="2" height="1"/><rect x="6" y="0" width="2" height="1"/><rect x="1" y="1" width="2" height="1"/><rect x="5" y="1" width="2" height="1"/><rect x="2" y="2" width="4" height="1"/><rect x="3" y="3" width="2" height="1"/><rect x="2" y="4" width="4" height="1"/><rect x="1" y="5" width="2" height="1"/><rect x="5" y="5" width="2" height="1"/><rect x="0" y="6" width="2" height="1"/><rect x="6" y="6" width="2" height="1"/></svg>
<svg style="left:10px;top:77px" width="17" height="15" shape-rendering="crispEdges"><rect x="8" y="2" width="1" height="1" fill="#FF0000"/><rect x="7" y="3" width="3" height="1" fill="#FF0000"/><rect x="5" y="4" width="1" height="1" fill="#FF0000"/><rect x="6" y="4" width="1" height="1" fill="#FFFF00"/><rect x="7" y="4" width="4" height="1" fill="#FF0000"/><rect x="3" y="5" width="4" height="1" fill="#FF0000"/><rect x="7" y="5" width="1" height="1" fill="#FFFF00"/><rect x="8" y="5" width="4" height="1" fill="#FF0000"/><rect x="12" y="5" width="1" height="1" fill="#000000"/><rect x="3" y="6" width="10" height="1" fill="#FF0000"/><rect x="13" y="6" width="1" height="1" fill="#000000"/><rect x="3" y="7" width="11" height="1" fill="#FF0000"/><rect x="14" y="7" width="1" height="1" fill="#000000"/><rect x="3" y="8" width="1" height="1" fill="#000000"/><rect x="4" y="8" width="10" height="1" fill="#FF0000"/><rect x="14" y="8" width="1" height="1" fill="#FFFFFF"/><rect x="4" y="9" width="1" height="1" fill="#000000"/><rect x="5" y="9" width="8" height="1" fill="#FF0000"/><rect x="13" y="9" width="2" height="1" fill="#FFFFFF"/><rect x="15" y="9" width="1" height="1" fill="#000000"/><rect x="5" y="10" width="1" height="1" fill="#000000"/><rect x="6" y="10" width="6" height="1" fill="#FF0000"/><rect x="12" y="10" width="1" height="1" fill="#FFFFFF"/><rect x="13" y="10" width="2" height="1" fill="#FF0000"/><rect x="15" y="10" width="1" height="1" fill="#000000"/><rect x="6" y="11" width="1" height="1" fill="#000000"/><rect x="7" y="11" width="3" height="1" fill="#FF0000"/><rect x="10" y="11" width="2" height="1" fill="#FFFFFF"/><rect x="12" y="11" width="2" height="1" fill="#FF0000"/><rect x="14" y="11" width="1" height="1" fill="#000000"/><rect x="7" y="12" width="1" height="1" fill="#000000"/><rect x="8" y="12" width="2" height="1" fill="#FF0000"/><rect x="10" y="12" width="2" height="1" fill="#FFFFFF"/><rect x="12" y="12" width="1" height="1" fill="#FF0000"/><rect x="13" y="12" width="1" height="1" fill="#000000"/><rect x="8" y="13" width="1" height="1" fill="#000000"/><rect x="9" y="13" width="2" height="1" fill="#FFFFFF"/><rect x="11" y="13" width="2" height="1" fill="#000000"/><rect x="9" y="14" width="2" height="1" fill="#000000"/></svg>
<div style="left:14px;top:102px;width:678px;height:402px;background:#fff;box-shadow:inset 1px 1px #808080,inset -1px -1px #FFFFFF,inset 2px 2px #404040,inset -2px -2px #D4D0C8"></div>
<div class="t ui" style="left:18px;top:105px;color:#000">Ацетоацетанилид</div>
<div class="t ui" style="left:18px;top:121px;color:#000">Ацетоацет-о-толуидид</div>
<div class="t ui" style="left:18px;top:137px;color:#000">Ацетобутират целлюлозы</div>
<div class="t ui" style="left:18px;top:153px;color:#000">Ацетогидразид</div>
<div class="t ui" style="left:18px;top:169px;color:#000">Ацетогуанамин</div>
<div class="t ui" style="left:18px;top:185px;color:#000">3-Ацетоксииндол</div>
<div class="t ui" style="left:18px;top:201px;color:#000">Ацетоксим</div>
<div class="t ui" style="left:18px;top:217px;color:#000">п-Ацетоксипропиофенон</div>
<div class="t ui" style="left:18px;top:233px;color:#000">11-Ацетоксиундекан</div>
<div class="t ui" style="left:18px;top:249px;color:#000">3-Ацетоксихинуклидин</div>
<div class="t ui" style="left:18px;top:265px;color:#000">Ацетометоксан</div>
<div class="t ui" style="left:18px;top:281px;color:#000">Ацетон</div>
<div class="t ui" style="left:18px;top:297px;color:#000">Ацетонанил</div>
<div class="t ui" style="left:18px;top:313px;color:#000">Ацетон, водные растворы</div>
<div class="t ui" style="left:18px;top:329px;color:#000">Ацетонилацетон</div>
<div class="t ui" style="left:18px;top:345px;color:#000">Ацетонилхлорид</div>
<div class="t ui" style="left:18px;top:361px;color:#000">Ацетонитрил</div>
<div class="t ui" style="left:18px;top:377px;color:#000">Ацетонциангидрин</div>
<div class="t ui" style="left:18px;top:393px;color:#000">гамма-Ацетопропиловый</div>
<div class="t ui" style="left:18px;top:409px;color:#000">Ацетопропиловый спирт</div>
<div class="t ui" style="left:18px;top:425px;color:#000">Ацетосукцинат целлюлозы</div>
<div class="t ui" style="left:18px;top:441px;color:#000">4-Ацетотолуидин</div>
<div class="t ui" style="left:18px;top:457px;color:#000">о-Ацетотолуидин</div>
<div class="t ui" style="left:16px;top:514px;color:#000">Переход по первым буквам</div>
<div style="left:674px;top:104px;width:16px;height:382px;background:repeating-conic-gradient(#fff 0 25%,#D4D0C8 0 50%) 0 0/2px 2px;"></div>
<div style="left:674px;top:104px;width:16px;height:16px;background:#D4D0C8;box-shadow:inset -1px -1px #404040,inset 1px 1px #D4D0C8,inset -2px -2px #808080,inset 2px 2px #FFFFFF"></div>
<svg style="left:678px;top:110px" width="7" height="4" fill="#000"><rect x="3" y="0" width="1" height="1"/><rect x="2" y="1" width="3" height="1"/><rect x="1" y="2" width="5" height="1"/><rect x="0" y="3" width="7" height="1"/></svg>
<div style="left:674px;top:470px;width:16px;height:16px;background:#D4D0C8;box-shadow:inset -1px -1px #404040,inset 1px 1px #D4D0C8,inset -2px -2px #808080,inset 2px 2px #FFFFFF"></div>
<svg style="left:678px;top:476px" width="7" height="4" fill="#000"><rect x="0" y="0" width="7" height="1"/><rect x="1" y="1" width="5" height="1"/><rect x="2" y="2" width="3" height="1"/><rect x="3" y="3" width="1" height="1"/></svg>
<div style="left:16px;top:486px;width:658px;height:16px;background:repeating-conic-gradient(#fff 0 25%,#D4D0C8 0 50%) 0 0/2px 2px;"></div>
<div style="left:16px;top:486px;width:16px;height:16px;background:#D4D0C8;box-shadow:inset -1px -1px #404040,inset 1px 1px #D4D0C8,inset -2px -2px #808080,inset 2px 2px #FFFFFF"></div>
<svg style="left:21px;top:490px" width="4" height="7" fill="#000"><rect x="3" y="0" width="1" height="1"/><rect x="2" y="1" width="2" height="1"/><rect x="1" y="2" width="3" height="1"/><rect x="0" y="3" width="4" height="1"/><rect x="1" y="4" width="3" height="1"/><rect x="2" y="5" width="2" height="1"/><rect x="3" y="6" width="1" height="1"/></svg>
<div style="left:32px;top:486px;width:16px;height:16px;background:#D4D0C8;box-shadow:inset -1px -1px #404040,inset 1px 1px #D4D0C8,inset -2px -2px #808080,inset 2px 2px #FFFFFF"></div>
<div style="left:110px;top:127px;width:621px;height:448px;background:#D4D0C8;box-shadow:inset 1px 1px #D4D0C8,inset -1px -1px #404040,inset 2px 2px #FFFFFF,inset -2px -2px #808080"></div>
<div style="left:114px;top:131px;width:613px;height:18px;background:linear-gradient(to right,#808080,#C0C0C0);"></div>
<div style="left:119px;top:133px;width:10px;height:14px;background:#fff;border-top:1px solid #000;border-bottom:1px solid #000;border-right:1px solid #000"></div><div style="left:120px;top:140px;width:2px;height:1px;background:#00f"></div><div style="left:123px;top:140px;width:4px;height:2px;background:#808080"></div>
<div class="t cap" style="left:133px;top:132px;color:#D4D0C8">Ацетон - Общие характеристики</div>
<div style="left:675px;top:133px;width:16px;height:14px;background:#D4D0C8;box-shadow:inset -1px -1px #404040,inset 1px 1px #FFFFFF,inset -2px -2px #808080,inset 2px 2px #D4D0C8"></div>
<svg style="left:679px;top:142px" width="6" height="2" fill="#000"><rect x="0" y="0" width="6" height="1"/><rect x="0" y="1" width="6" height="1"/></svg>
<div style="left:691px;top:133px;width:16px;height:14px;background:#D4D0C8;box-shadow:inset -1px -1px #404040,inset 1px 1px #FFFFFF,inset -2px -2px #808080,inset 2px 2px #D4D0C8"></div>
<svg style="left:694px;top:135px" width="9" height="9" fill="#000"><rect x="0" y="0" width="9" height="1"/><rect x="0" y="1" width="9" height="1"/><rect x="0" y="2" width="1" height="1"/><rect x="8" y="2" width="1" height="1"/><rect x="0" y="3" width="1" height="1"/><rect x="8" y="3" width="1" height="1"/><rect x="0" y="4" width="1" height="1"/><rect x="8" y="4" width="1" height="1"/><rect x="0" y="5" width="1" height="1"/><rect x="8" y="5" width="1" height="1"/><rect x="0" y="6" width="1" height="1"/><rect x="8" y="6" width="1" height="1"/><rect x="0" y="7" width="1" height="1"/><rect x="8" y="7" width="1" height="1"/><rect x="0" y="8" width="9" height="1"/></svg>
<div style="left:709px;top:133px;width:16px;height:14px;background:#D4D0C8;box-shadow:inset -1px -1px #404040,inset 1px 1px #FFFFFF,inset -2px -2px #808080,inset 2px 2px #D4D0C8"></div>
<svg style="left:713px;top:136px" width="8" height="7" fill="#000"><rect x="0" y="0" width="2" height="1"/><rect x="6" y="0" width="2" height="1"/><rect x="1" y="1" width="2" height="1"/><rect x="5" y="1" width="2" height="1"/><rect x="2" y="2" width="4" height="1"/><rect x="3" y="3" width="2" height="1"/><rect x="2" y="4" width="4" height="1"/><rect x="1" y="5" width="2" height="1"/><rect x="5" y="5" width="2" height="1"/><rect x="0" y="6" width="2" height="1"/><rect x="6" y="6" width="2" height="1"/></svg>
<div style="left:114px;top:150px;width:613px;height:421px;background:#fff;box-shadow:inset 1px 1px #808080,inset -1px -1px #FFFFFF,inset 2px 2px #404040,inset -2px -2px #D4D0C8"></div>
<div style="left:709px;top:152px;width:16px;height:417px;background:repeating-conic-gradient(#fff 0 25%,#D4D0C8 0 50%) 0 0/2px 2px;"></div>
<div style="left:709px;top:152px;width:16px;height:16px;background:#D4D0C8;box-shadow:inset -1px -1px #404040,inset 1px 1px #D4D0C8,inset -2px -2px #808080,inset 2px 2px #FFFFFF"></div>
<svg style="left:714px;top:159px" width="7" height="4" fill="#FFFFFF"><rect x="3" y="0" width="1" height="1"/><rect x="2" y="1" width="3" height="1"/><rect x="1" y="2" width="5" height="1"/><rect x="0" y="3" width="7" height="1"/></svg>
<svg style="left:713px;top:158px" width="7" height="4" fill="#808080"><rect x="3" y="0" width="1" height="1"/><rect x="2" y="1" width="3" height="1"/><rect x="1" y="2" width="5" height="1"/><rect x="0" y="3" width="7" height="1"/></svg>
<div style="left:709px;top:553px;width:16px;height:16px;background:#D4D0C8;box-shadow:inset -1px -1px #404040,inset 1px 1px #D4D0C8,inset -2px -2px #808080,inset 2px 2px #FFFFFF"></div>
<svg style="left:713px;top:559px" width="7" height="4" fill="#000"><rect x="0" y="0" width="7" height="1"/><rect x="1" y="1" width="5" height="1"/><rect x="2" y="2" width="3" height="1"/><rect x="3" y="3" width="1" height="1"/></svg>
<div class="t hd" style="left:129px;top:170px;color:#000">Ацетон (<i>диметилкетон; 2-пропанон</i>)</div>
<div class="t sr" style="left:130px;top:223px;color:#000;letter-spacing:-0.06px">Легковоспламеняющаяся жидкость. В воде неограниченно растворяется.</div>
<div style="left:635px;top:169px;width:56px;height:26px;background:#000080;"></div>
<div class="t sr" style="left:642px;top:170px;color:#fff">C</div>
<div class="t fsub" style="left:652px;top:176px;color:#fff">3</div>
<div class="t sr" style="left:660px;top:170px;color:#fff">H</div>
<div class="t fsub" style="left:671px;top:176px;color:#fff">6</div>
<div class="t sr" style="left:679px;top:170px;color:#fff">O</div>
<svg style="left:137px;top:309px" width="6" height="9" fill="#000"><rect x="0" y="0" width="1" height="1"/><rect x="5" y="0" width="1" height="1"/><rect x="0" y="1" width="1" height="1"/><rect x="5" y="1" width="1" height="1"/><rect x="0" y="2" width="1" height="1"/><rect x="5" y="2" width="1" height="1"/><rect x="0" y="3" width="1" height="1"/><rect x="5" y="3" width="1" height="1"/><rect x="0" y="4" width="6" height="1"/><rect x="0" y="5" width="1" height="1"/><rect x="5" y="5" width="1" height="1"/><rect x="0" y="6" width="1" height="1"/><rect x="5" y="6" width="1" height="1"/><rect x="0" y="7" width="1" height="1"/><rect x="5" y="7" width="1" height="1"/><rect x="0" y="8" width="1" height="1"/><rect x="5" y="8" width="1" height="1"/></svg>
<svg style="left:145px;top:315px" width="5" height="9" fill="#000"><rect x="1" y="0" width="3" height="1"/><rect x="0" y="1" width="1" height="1"/><rect x="4" y="1" width="1" height="1"/><rect x="4" y="2" width="1" height="1"/><rect x="4" y="3" width="1" height="1"/><rect x="2" y="4" width="2" height="1"/><rect x="4" y="5" width="1" height="1"/><rect x="4" y="6" width="1" height="1"/><rect x="0" y="7" width="1" height="1"/><rect x="4" y="7" width="1" height="1"/><rect x="1" y="8" width="3" height="1"/></svg>
<svg style="left:151px;top:309px" width="6" height="9" fill="#000"><rect x="1" y="0" width="4" height="1"/><rect x="0" y="1" width="1" height="1"/><rect x="5" y="1" width="1" height="1"/><rect x="0" y="2" width="1" height="1"/><rect x="0" y="3" width="1" height="1"/><rect x="0" y="4" width="1" height="1"/><rect x="0" y="5" width="1" height="1"/><rect x="0" y="6" width="1" height="1"/><rect x="0" y="7" width="1" height="1"/><rect x="5" y="7" width="1" height="1"/><rect x="1" y="8" width="4" height="1"/></svg>
<div style="left:157px;top:313px;width:29px;height:1px;background:#000;"></div>
<svg style="left:187px;top:309px" width="6" height="9" fill="#000"><rect x="1" y="0" width="4" height="1"/><rect x="0" y="1" width="1" height="1"/><rect x="5" y="1" width="1" height="1"/><rect x="0" y="2" width="1" height="1"/><rect x="0" y="3" width="1" height="1"/><rect x="0" y="4" width="1" height="1"/><rect x="0" y="5" width="1" height="1"/><rect x="0" y="6" width="1" height="1"/><rect x="0" y="7" width="1" height="1"/><rect x="5" y="7" width="1" height="1"/><rect x="1" y="8" width="4" height="1"/></svg>
<div style="left:193px;top:313px;width:29px;height:1px;background:#000;"></div>
<svg style="left:223px;top:309px" width="6" height="9" fill="#000"><rect x="1" y="0" width="4" height="1"/><rect x="0" y="1" width="1" height="1"/><rect x="5" y="1" width="1" height="1"/><rect x="0" y="2" width="1" height="1"/><rect x="0" y="3" width="1" height="1"/><rect x="0" y="4" width="1" height="1"/><rect x="0" y="5" width="1" height="1"/><rect x="0" y="6" width="1" height="1"/><rect x="0" y="7" width="1" height="1"/><rect x="5" y="7" width="1" height="1"/><rect x="1" y="8" width="4" height="1"/></svg>
<svg style="left:230px;top:309px" width="6" height="9" fill="#000"><rect x="0" y="0" width="1" height="1"/><rect x="5" y="0" width="1" height="1"/><rect x="0" y="1" width="1" height="1"/><rect x="5" y="1" width="1" height="1"/><rect x="0" y="2" width="1" height="1"/><rect x="5" y="2" width="1" height="1"/><rect x="0" y="3" width="1" height="1"/><rect x="5" y="3" width="1" height="1"/><rect x="0" y="4" width="6" height="1"/><rect x="0" y="5" width="1" height="1"/><rect x="5" y="5" width="1" height="1"/><rect x="0" y="6" width="1" height="1"/><rect x="5" y="6" width="1" height="1"/><rect x="0" y="7" width="1" height="1"/><rect x="5" y="7" width="1" height="1"/><rect x="0" y="8" width="1" height="1"/><rect x="5" y="8" width="1" height="1"/></svg>
<svg style="left:238px;top:315px" width="5" height="9" fill="#000"><rect x="1" y="0" width="3" height="1"/><rect x="0" y="1" width="1" height="1"/><rect x="4" y="1" width="1" height="1"/><rect x="4" y="2" width="1" height="1"/><rect x="4" y="3" width="1" height="1"/><rect x="2" y="4" width="2" height="1"/><rect x="4" y="5" width="1" height="1"/><rect x="4" y="6" width="1" height="1"/><rect x="0" y="7" width="1" height="1"/><rect x="4" y="7" width="1" height="1"/><rect x="1" y="8" width="3" height="1"/></svg>
<svg style="left:186px;top:273px" width="6" height="9" fill="#000"><rect x="1" y="0" width="4" height="1"/><rect x="0" y="1" width="1" height="1"/><rect x="5" y="1" width="1" height="1"/><rect x="0" y="2" width="1" height="1"/><rect x="5" y="2" width="1" height="1"/><rect x="0" y="3" width="1" height="1"/><rect x="5" y="3" width="1" height="1"/><rect x="0" y="4" width="1" height="1"/><rect x="5" y="4" width="1" height="1"/><rect x="0" y="5" width="1" height="1"/><rect x="5" y="5" width="1" height="1"/><rect x="0" y="6" width="1" height="1"/><rect x="5" y="6" width="1" height="1"/><rect x="0" y="7" width="1" height="1"/><rect x="5" y="7" width="1" height="1"/><rect x="1" y="8" width="4" height="1"/></svg>
<div style="left:186px;top:284px;width:1px;height:23px;background:#000;"></div>
<div style="left:192px;top:284px;width:1px;height:23px;background:#000;"></div>
<div style="left:260px;top:246px;width:687px;height:375px;background:#D4D0C8;box-shadow:inset 1px 1px #D4D0C8,inset -1px -1px #404040,inset 2px 2px #FFFFFF,inset -2px -2px #808080"></div>
<div style="left:264px;top:250px;width:679px;height:18px;background:linear-gradient(to right,#808080,#C0C0C0);"></div>
<div style="left:269px;top:252px;width:10px;height:14px;background:#fff;border-top:1px solid #000;border-bottom:1px solid #000;border-right:1px solid #000"></div><div style="left:270px;top:259px;width:2px;height:1px;background:#00f"></div><div style="left:273px;top:259px;width:4px;height:2px;background:#808080"></div>
<div class="t cap" style="left:283px;top:251px;color:#D4D0C8">Ацетон - Физико-химические свойства</div>
<div style="left:891px;top:252px;width:16px;height:14px;background:#D4D0C8;box-shadow:inset -1px -1px #404040,inset 1px 1px #FFFFFF,inset -2px -2px #808080,inset 2px 2px #D4D0C8"></div>
<svg style="left:895px;top:261px" width="6" height="2" fill="#000"><rect x="0" y="0" width="6" height="1"/><rect x="0" y="1" width="6" height="1"/></svg>
<div style="left:907px;top:252px;width:16px;height:14px;background:#D4D0C8;box-shadow:inset -1px -1px #404040,inset 1px 1px #FFFFFF,inset -2px -2px #808080,inset 2px 2px #D4D0C8"></div>
<svg style="left:910px;top:254px" width="9" height="9" fill="#000"><rect x="0" y="0" width="9" height="1"/><rect x="0" y="1" width="9" height="1"/><rect x="0" y="2" width="1" height="1"/><rect x="8" y="2" width="1" height="1"/><rect x="0" y="3" width="1" height="1"/><rect x="8" y="3" width="1" height="1"/><rect x="0" y="4" width="1" height="1"/><rect x="8" y="4" width="1" height="1"/><rect x="0" y="5" width="1" height="1"/><rect x="8" y="5" width="1" height="1"/><rect x="0" y="6" width="1" height="1"/><rect x="8" y="6" width="1" height="1"/><rect x="0" y="7" width="1" height="1"/><rect x="8" y="7" width="1" height="1"/><rect x="0" y="8" width="9" height="1"/></svg>
<div style="left:925px;top:252px;width:16px;height:14px;background:#D4D0C8;box-shadow:inset -1px -1px #404040,inset 1px 1px #FFFFFF,inset -2px -2px #808080,inset 2px 2px #D4D0C8"></div>
<svg style="left:929px;top:255px" width="8" height="7" fill="#000"><rect x="0" y="0" width="2" height="1"/><rect x="6" y="0" width="2" height="1"/><rect x="1" y="1" width="2" height="1"/><rect x="5" y="1" width="2" height="1"/><rect x="2" y="2" width="4" height="1"/><rect x="3" y="3" width="2" height="1"/><rect x="2" y="4" width="4" height="1"/><rect x="1" y="5" width="2" height="1"/><rect x="5" y="5" width="2" height="1"/><rect x="0" y="6" width="2" height="1"/><rect x="6" y="6" width="2" height="1"/></svg>
<div style="left:264px;top:269px;width:679px;height:348px;background:#fff;box-shadow:inset 1px 1px #808080,inset -1px -1px #FFFFFF,inset 2px 2px #404040,inset -2px -2px #D4D0C8"></div>
<div style="left:925px;top:271px;width:16px;height:344px;background:repeating-conic-gradient(#fff 0 25%,#D4D0C8 0 50%) 0 0/2px 2px;"></div>
<div style="left:925px;top:271px;width:16px;height:16px;background:#D4D0C8;box-shadow:inset -1px -1px #404040,inset 1px 1px #D4D0C8,inset -2px -2px #808080,inset 2px 2px #FFFFFF"></div>
<svg style="left:929px;top:277px" width="7" height="4" fill="#000"><rect x="3" y="0" width="1" height="1"/><rect x="2" y="1" width="3" height="1"/><rect x="1" y="2" width="5" height="1"/><rect x="0" y="3" width="7" height="1"/></svg>
<div style="left:925px;top:287px;width:16px;height:300px;background:#D4D0C8;box-shadow:inset -1px -1px #404040,inset 1px 1px #D4D0C8,inset -2px -2px #808080,inset 2px 2px #FFFFFF"></div>
<div style="left:925px;top:599px;width:16px;height:16px;background:#D4D0C8;box-shadow:inset -1px -1px #404040,inset 1px 1px #D4D0C8,inset -2px -2px #808080,inset 2px 2px #FFFFFF"></div>
<svg style="left:929px;top:605px" width="7" height="4" fill="#000"><rect x="0" y="0" width="7" height="1"/><rect x="1" y="1" width="5" height="1"/><rect x="2" y="2" width="3" height="1"/><rect x="3" y="3" width="1" height="1"/></svg>
<div class="t hd" style="left:279px;top:289px;color:#000">Ацетон (<i>диметилкетон; 2-пропанон</i>)</div>
<div style="left:851px;top:288px;width:56px;height:26px;background:#000080;"></div>
<div class="t sr" style="left:858px;top:289px;color:#fff">C</div>
<div class="t fsub" style="left:868px;top:295px;color:#fff">3</div>
<div class="t sr" style="left:876px;top:289px;color:#fff">H</div>
<div class="t fsub" style="left:887px;top:295px;color:#fff">6</div>
<div class="t sr" style="left:895px;top:289px;color:#fff">O</div>
<div style="left:276px;top:358px;width:632px;height:257px;background:#000;"></div>
<div style="left:278px;top:360px;width:628px;height:21px;background:#000080;"></div>
<div class="t srb" style="left:278px;width:628px;top:361px;text-align:center;color:#fff">Физико-химические свойства</div>
<div style="left:278px;top:383px;width:209px;height:21px;background:#9ECEFF;"></div>
<div style="left:489px;top:383px;width:208px;height:21px;background:#fff;"></div>
<div style="left:699px;top:383px;width:207px;height:21px;background:#fff;"></div>
<div style="left:278px;top:383px;width:209px;height:21px;overflow:hidden"><div class="sr" style="left:1px;top:1px;width:208px;color:#000">Молекулярная масса</div></div>
<div style="left:489px;top:383px;width:208px;height:21px;overflow:hidden"><div class="sr" style="left:0;top:0px;width:208px;text-align:center;color:#000;white-space:nowrap">58,08 у.е.</div></div>
<div style="left:278px;top:406px;width:209px;height:24px;background:#9ECEFF;"></div>
<div style="left:489px;top:406px;width:208px;height:24px;background:#fff;"></div>
<div style="left:699px;top:406px;width:207px;height:24px;background:#fff;"></div>
<div style="left:278px;top:406px;width:209px;height:24px;overflow:hidden"><div class="sr" style="left:1px;top:2px;width:208px;color:#000">Плотность</div></div>
<div style="left:489px;top:406px;width:208px;height:24px;overflow:hidden"><div class="sr" style="left:0;top:4px;width:208px;text-align:center;color:#000;white-space:nowrap">790,8 кг/м<sup>3</sup></div></div>
<div style="left:699px;top:406px;width:207px;height:24px;overflow:hidden"><div class="sr" style="left:0;top:2px;width:207px;text-align:center;color:#000;white-space:nowrap">при 20 °С.</div></div>
<div style="left:278px;top:432px;width:209px;height:21px;background:#9ECEFF;"></div>
<div style="left:489px;top:432px;width:208px;height:21px;background:#fff;"></div>
<div style="left:699px;top:432px;width:207px;height:21px;background:#fff;"></div>
<div style="left:278px;top:432px;width:209px;height:21px;overflow:hidden"><div class="sr" style="left:1px;top:1px;width:208px;color:#000">Показатель преломления</div></div>
<div style="left:278px;top:455px;width:209px;height:21px;background:#9ECEFF;"></div>
<div style="left:489px;top:455px;width:208px;height:21px;background:#fff;"></div>
<div style="left:699px;top:455px;width:207px;height:21px;background:#fff;"></div>
<div style="left:278px;top:455px;width:209px;height:21px;overflow:hidden"><div class="sr" style="left:1px;top:1px;width:208px;color:#000">Температура плавления</div></div>
<div style="left:278px;top:478px;width:209px;height:21px;background:#9ECEFF;"></div>
<div style="left:489px;top:478px;width:208px;height:21px;background:#fff;"></div>
<div style="left:699px;top:478px;width:207px;height:21px;background:#fff;"></div>
<div style="left:278px;top:478px;width:209px;height:21px;overflow:hidden"><div class="sr" style="left:1px;top:1px;width:208px;color:#000">Температура кипения</div></div>
<div style="left:278px;top:501px;width:209px;height:21px;background:#9ECEFF;"></div>
<div style="left:489px;top:501px;width:208px;height:21px;background:#fff;"></div>
<div style="left:699px;top:501px;width:207px;height:21px;background:#fff;"></div>
<div style="left:278px;top:501px;width:209px;height:21px;overflow:hidden"><div class="sr" style="left:1px;top:1px;width:208px;color:#000">Константа Антуана А</div></div>
<div style="left:278px;top:524px;width:209px;height:21px;background:#9ECEFF;"></div>
<div style="left:489px;top:524px;width:208px;height:21px;background:#fff;"></div>
<div style="left:699px;top:524px;width:207px;height:21px;background:#fff;"></div>
<div style="left:278px;top:524px;width:209px;height:21px;overflow:hidden"><div class="sr" style="left:1px;top:1px;width:208px;color:#000">Константа Антуана В</div></div>
<div style="left:278px;top:547px;width:209px;height:26px;background:#9ECEFF;"></div>
<div style="left:489px;top:547px;width:208px;height:26px;background:#fff;"></div>
<div style="left:699px;top:547px;width:207px;height:26px;background:#fff;"></div>
<div style="left:278px;top:547px;width:209px;height:26px;overflow:hidden"><div class="sr" style="left:1px;top:1px;width:208px;color:#000">Константа Антуана С<sub>A</sub></div></div>
<div style="left:278px;top:575px;width:209px;height:21px;background:#9ECEFF;"></div>
<div style="left:489px;top:575px;width:208px;height:21px;background:#fff;"></div>
<div style="left:699px;top:575px;width:207px;height:21px;background:#fff;"></div>
<div style="left:278px;top:575px;width:209px;height:21px;overflow:hidden"><div class="sr" style="left:1px;top:1px;width:208px;color:#000">Теплота сгорания</div></div>
<div style="left:278px;top:598px;width:209px;height:17px;background:#9ECEFF;"></div>
<div style="left:489px;top:598px;width:208px;height:17px;background:#fff;"></div>
<div style="left:699px;top:598px;width:207px;height:17px;background:#fff;"></div>
<div style="left:278px;top:598px;width:209px;height:17px;overflow:hidden"><div class="sr" style="left:1px;top:1px;width:208px;color:#000">Удельное электрическое сопротивление</div></div>
<div style="left:469px;top:433px;width:552px;height:303px;background:#D4D0C8;box-shadow:inset 1px 1px #D4D0C8,inset -1px -1px #404040,inset 2px 2px #FFFFFF,inset -2px -2px #808080"></div>
<div style="left:473px;top:437px;width:544px;height:18px;background:linear-gradient(to right,#0A246A,#A6CAF0);"></div>
<div style="left:478px;top:439px;width:10px;height:14px;background:#fff;border-top:1px solid #000;border-bottom:1px solid #000;border-right:1px solid #000"></div><div style="left:479px;top:446px;width:2px;height:1px;background:#00f"></div><div style="left:482px;top:446px;width:4px;height:2px;background:#808080"></div>
<div class="t cap" style="left:492px;top:438px;color:#fff">Ацетон - Показатели пожароопасности</div>
<div style="left:965px;top:439px;width:16px;height:14px;background:#D4D0C8;box-shadow:inset -1px -1px #404040,inset 1px 1px #FFFFFF,inset -2px -2px #808080,inset 2px 2px #D4D0C8"></div>
<svg style="left:969px;top:448px" width="6" height="2" fill="#000"><rect x="0" y="0" width="6" height="1"/><rect x="0" y="1" width="6" height="1"/></svg>
<div style="left:981px;top:439px;width:16px;height:14px;background:#D4D0C8;box-shadow:inset -1px -1px #404040,inset 1px 1px #FFFFFF,inset -2px -2px #808080,inset 2px 2px #D4D0C8"></div>
<svg style="left:984px;top:441px" width="9" height="9" fill="#000"><rect x="0" y="0" width="9" height="1"/><rect x="0" y="1" width="9" height="1"/><rect x="0" y="2" width="1" height="1"/><rect x="8" y="2" width="1" height="1"/><rect x="0" y="3" width="1" height="1"/><rect x="8" y="3" width="1" height="1"/><rect x="0" y="4" width="1" height="1"/><rect x="8" y="4" width="1" height="1"/><rect x="0" y="5" width="1" height="1"/><rect x="8" y="5" width="1" height="1"/><rect x="0" y="6" width="1" height="1"/><rect x="8" y="6" width="1" height="1"/><rect x="0" y="7" width="1" height="1"/><rect x="8" y="7" width="1" height="1"/><rect x="0" y="8" width="9" height="1"/></svg>
<div style="left:999px;top:439px;width:16px;height:14px;background:#D4D0C8;box-shadow:inset -1px -1px #404040,inset 1px 1px #FFFFFF,inset -2px -2px #808080,inset 2px 2px #D4D0C8"></div>
<svg style="left:1003px;top:442px" width="8" height="7" fill="#000"><rect x="0" y="0" width="2" height="1"/><rect x="6" y="0" width="2" height="1"/><rect x="1" y="1" width="2" height="1"/><rect x="5" y="1" width="2" height="1"/><rect x="2" y="2" width="4" height="1"/><rect x="3" y="3" width="2" height="1"/><rect x="2" y="4" width="4" height="1"/><rect x="1" y="5" width="2" height="1"/><rect x="5" y="5" width="2" height="1"/><rect x="0" y="6" width="2" height="1"/><rect x="6" y="6" width="2" height="1"/></svg>
<div style="left:473px;top:456px;width:544px;height:276px;background:#fff;box-shadow:inset 1px 1px #808080,inset -1px -1px #FFFFFF,inset 2px 2px #404040,inset -2px -2px #D4D0C8"></div>
<div style="left:999px;top:458px;width:16px;height:272px;background:repeating-conic-gradient(#fff 0 25%,#D4D0C8 0 50%) 0 0/2px 2px;"></div>
<div style="left:999px;top:458px;width:16px;height:16px;background:#D4D0C8;box-shadow:inset -1px -1px #404040,inset 1px 1px #D4D0C8,inset -2px -2px #808080,inset 2px 2px #FFFFFF"></div>
<svg style="left:1003px;top:464px" width="7" height="4" fill="#000"><rect x="3" y="0" width="1" height="1"/><rect x="2" y="1" width="3" height="1"/><rect x="1" y="2" width="5" height="1"/><rect x="0" y="3" width="7" height="1"/></svg>
<div style="left:999px;top:474px;width:16px;height:55px;background:#D4D0C8;box-shadow:inset -1px -1px #404040,inset 1px 1px #D4D0C8,inset -2px -2px #808080,inset 2px 2px #FFFFFF"></div>
<div style="left:999px;top:714px;width:16px;height:16px;background:#D4D0C8;box-shadow:inset -1px -1px #404040,inset 1px 1px #D4D0C8,inset -2px -2px #808080,inset 2px 2px #FFFFFF"></div>
<svg style="left:1003px;top:720px" width="7" height="4" fill="#000"><rect x="0" y="0" width="7" height="1"/><rect x="1" y="1" width="5" height="1"/><rect x="2" y="2" width="3" height="1"/><rect x="3" y="3" width="1" height="1"/></svg>
<div class="t hd" style="left:488px;top:476px;color:#000">Ацетон (<i>диметилкетон; 2-пропанон</i>)</div>
<div style="left:927px;top:475px;width:55px;height:26px;background:#000080;"></div>
<div class="t sr" style="left:933px;top:476px;color:#fff">C</div>
<div class="t fsub" style="left:943px;top:482px;color:#fff">3</div>
<div class="t sr" style="left:951px;top:476px;color:#fff">H</div>
<div class="t fsub" style="left:962px;top:482px;color:#fff">6</div>
<div class="t sr" style="left:970px;top:476px;color:#fff">O</div>
<div style="left:485px;top:545px;width:499px;height:185px;background:#000;"></div>
<div style="left:487px;top:547px;width:495px;height:21px;background:#000080;"></div>
<div class="t srb" style="left:487px;width:495px;top:548px;text-align:center;color:#fff">Показатели пожаровзрывоопасности</div>
<div style="left:487px;top:570px;width:164px;height:40px;background:#9ECEFF;"></div>
<div style="left:653px;top:570px;width:164px;height:40px;background:#fff;"></div>
<div style="left:819px;top:570px;width:163px;height:40px;background:#fff;"></div>
<div style="left:487px;top:570px;width:164px;height:40px;overflow:hidden"><div class="sr" style="left:1px;top:1px;width:163px;color:#000">Температура вспышки в закрытом тигле</div></div>
<div style="left:653px;top:570px;width:164px;height:40px;overflow:hidden"><div class="sr" style="left:0;top:10px;width:164px;text-align:center;color:#000;white-space:nowrap">-20 °С</div></div>
<div style="left:487px;top:612px;width:164px;height:40px;background:#9ECEFF;"></div>
<div style="left:653px;top:612px;width:164px;height:40px;background:#fff;"></div>
<div style="left:819px;top:612px;width:163px;height:40px;background:#fff;"></div>
<div style="left:487px;top:612px;width:164px;height:40px;overflow:hidden"><div class="sr" style="left:1px;top:1px;width:163px;color:#000">Температура вспышки в открытом тигле</div></div>
<div style="left:653px;top:612px;width:164px;height:40px;overflow:hidden"><div class="sr" style="left:0;top:10px;width:164px;text-align:center;color:#000;white-space:nowrap">-9 °С</div></div>
<div style="left:487px;top:654px;width:164px;height:40px;background:#9ECEFF;"></div>
<div style="left:653px;top:654px;width:164px;height:40px;background:#fff;"></div>
<div style="left:819px;top:654px;width:163px;height:40px;background:#fff;"></div>
<div style="left:487px;top:654px;width:164px;height:40px;overflow:hidden"><div class="sr" style="left:1px;top:1px;width:163px;color:#000">Температура воспламенения</div></div>
<div style="left:653px;top:654px;width:164px;height:40px;overflow:hidden"><div class="sr" style="left:0;top:10px;width:164px;text-align:center;color:#000;white-space:nowrap">-5 °С</div></div>
<div style="left:487px;top:696px;width:164px;height:34px;background:#9ECEFF;"></div>
<div style="left:653px;top:696px;width:164px;height:34px;background:#fff;"></div>
<div style="left:819px;top:696px;width:163px;height:34px;background:#fff;"></div>
<div style="left:487px;top:696px;width:164px;height:34px;overflow:hidden"><div class="sr" style="left:1px;top:1px;width:163px;color:#000">Температура самовоспламенения</div></div>
<div style="left:653px;top:696px;width:164px;height:34px;overflow:hidden"><div class="sr" style="left:0;top:11px;width:164px;text-align:center;color:#000;white-space:nowrap">535 °С</div></div>
</body></html>
